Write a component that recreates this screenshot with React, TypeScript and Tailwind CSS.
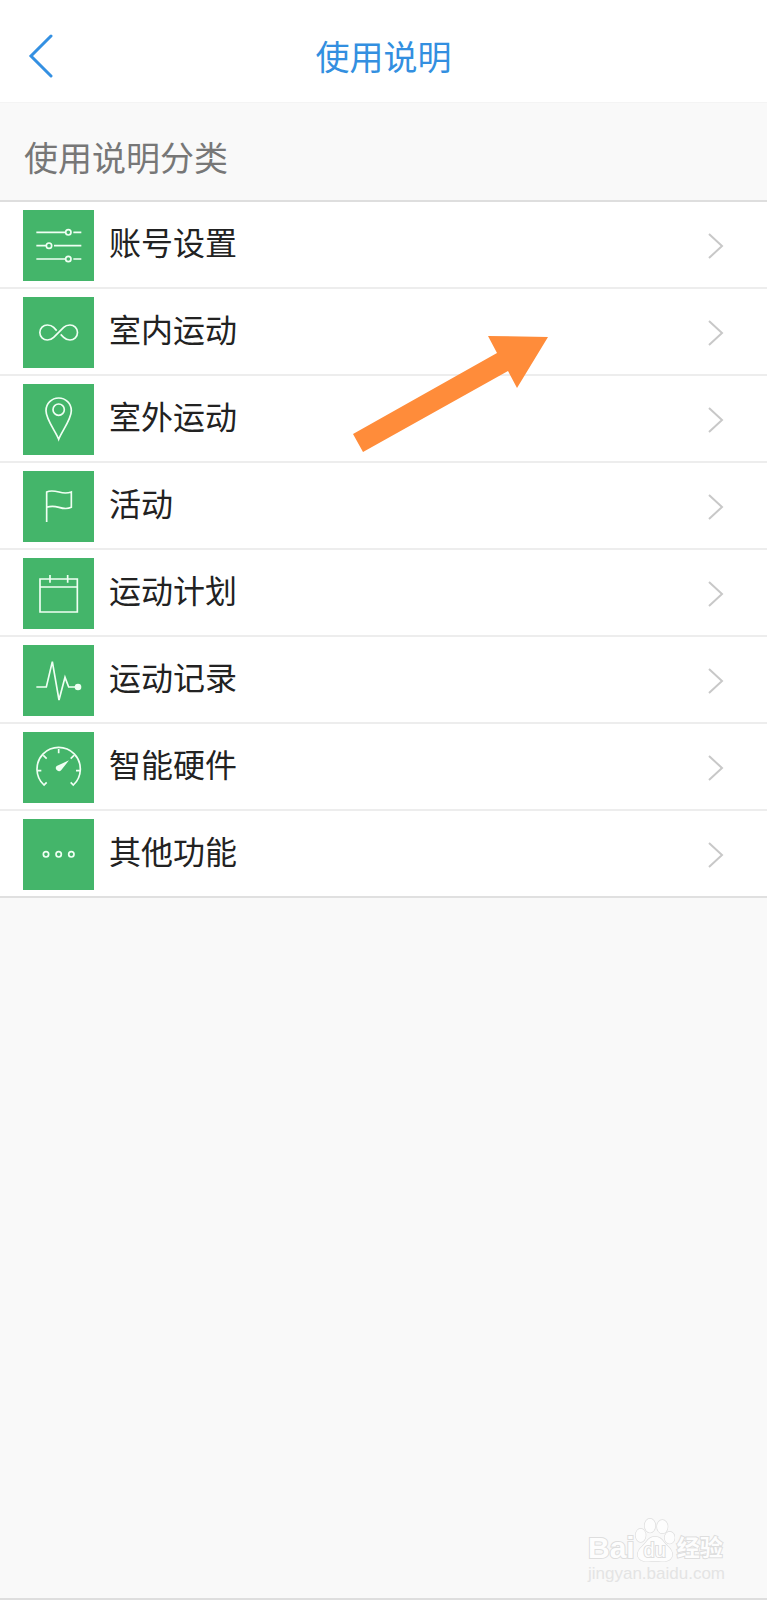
import type { ReactNode } from 'react';

interface Category {
    label: string;
    icon: ReactNode;
}

const categories: Category[] = [
    {
        label: '账号设置',
        icon: (
            <>
                <path d="M40 67H127M151 67H175M40 107H69M93 107H175M40 147H127M151 147H175" />
                <circle cx="136" cy="67" r="8" />
                <circle cx="78" cy="107" r="8" />
                <circle cx="136" cy="147" r="8" />
            </>
        ),
    },
    {
        label: '室内运动',
        icon: (
            <path d="M101 101L92 91C85 84 80 84 73 84A22 22 0 0 0 73 129C82 129 87 126 92 121L122 91C127 86 132 84 141 84A22 22 0 0 1 141 129C132 129 127 126 122 121L113 112" />
        ),
    },
    {
        label: '室外运动',
        icon: (
            <>
                <path d="M107 166C99 144 69 106 69 80A38 38 0 0 1 145 80C145 106 115 144 107 166Z" />
                <circle cx="107" cy="77" r="17" />
            </>
        ),
    },
    {
        label: '活动',
        icon: <path d="M71 153V63C83 57 96 60 108 63C121 67 134 67 145 63V109C134 114 121 113 108 109C96 106 83 105 71 109" />,
    },
    {
        label: '运动计划',
        icon: <path d="M51 63H163V162H51ZM51 87H163M81 51V74M134 51V74" />,
    },
    {
        label: '运动记录',
        icon: (
            <>
                <path d="M40 126H70L88 50L108 165L126 97L137 126H160" />
                <circle cx="165" cy="126" r="10" fill="currentColor" stroke="none" />
            </>
        ),
    },
    {
        label: '智能硬件',
        icon: (
            <>
                <path d="M71 151L63 159A65 65 0 1 1 151 159L143 151M107 51V64M42 116H55M159 116H172M61 70L71 80M153 70L143 80" />
                <path d="M138 85L115 114A9 9 0 1 1 101 102Z" fill="currentColor" stroke="none" />
            </>
        ),
    },
    {
        label: '其他功能',
        icon: (
            <>
                <circle cx="69" cy="106" r="8" />
                <circle cx="107" cy="106" r="8" />
                <circle cx="145" cy="106" r="8" />
            </>
        ),
    },
];

const CategoryRow = ({ label, icon }: Category) => (
    <li className="border-b-2 border-[#ededed] last:border-[#e0e0e0]">
        <a href="#" className="flex items-center pt-2 pr-[43px] pb-1.5 pl-[23px]">
            <span className="size-[71px] shrink-0 bg-[#44b56a] text-[#effff3]">
                <svg viewBox="0 0 213 213" className="size-full" fill="none" stroke="currentColor" strokeWidth="5" aria-hidden="true">
                    {icon}
                </svg>
            </span>
            <span className="ml-[15px] flex-1 pb-1 text-[32px] leading-10 text-[#222222]">{label}</span>
            <svg viewBox="0 0 16 28" className="h-7 w-4 shrink-0" fill="none" stroke="#c8c8c8" strokeWidth="2" aria-hidden="true">
                <path d="M1 2L14 14L1 26" />
            </svg>
        </a>
    </li>
);

const Arrow = () => (
    <svg viewBox="0 0 195 116" className="pointer-events-none absolute top-[134px] left-[46%] w-[195px]" fill="#ff8c3a" aria-hidden="true">
        <path d="M0 98L144 17L135 0L195 1L164 52L155 35L10 116Z" />
    </svg>
);

const Watermark = () => (
    <div className="absolute right-11 bottom-3 w-[135px] text-[#fdfdfd]">
        <div className="flex h-[46px] items-end [paint-order:stroke_fill] [-webkit-text-stroke:2px_#dedede]">
            <span className="text-[30px] leading-7 font-bold">Bai</span>
            <span className="relative h-[46px] w-10 shrink-0">
                <svg viewBox="0 0 120 138" className="size-full" fill="#fdfdfd" stroke="#dedede" strokeWidth="4" aria-hidden="true">
                    <ellipse cx="17" cy="58" rx="15" ry="20" />
                    <ellipse cx="45" cy="29" rx="16" ry="21" />
                    <ellipse cx="82" cy="32" rx="16" ry="20" />
                    <ellipse cx="104" cy="65" rx="15" ry="18" />
                    <path d="M60 62C80 62 84 78 98 91C112 103 117 118 106 129C96 139 78 136 60 136C42 136 24 139 14 129C3 118 8 103 22 91C36 78 40 62 60 62Z" />
                </svg>
                <span className="absolute inset-x-0 bottom-0 text-center text-[20px] leading-6">du</span>
            </span>
            <span className="ml-0.5 text-[23px] leading-7 font-bold whitespace-nowrap">经验</span>
        </div>
        <div className="text-[17px] leading-6 text-[#e4e4e4]">jingyan.baidu.com</div>
    </div>
);

export default function App() {
    return (
        <div className="relative min-h-screen border-b-2 border-[#dedede] bg-[#f9f9f9] font-['Liberation_Sans','Noto_Sans_CJK_SC',sans-serif]">
            <header className="grid grid-cols-[64px_1fr_64px] items-center border-b border-[#f4f4f4] bg-white pt-8 pb-[22px]">
                <button type="button" aria-label="返回" className="flex h-12 items-center pl-7">
                    <svg viewBox="0 0 26 44" className="h-11 w-[26px]" fill="none" stroke="#3490e2" strokeWidth="3" strokeLinecap="round" aria-hidden="true">
                        <path d="M23 2L3 22L23 42" />
                    </svg>
                </button>
                <h1 className="pt-1 text-center text-[34px] leading-11 text-[#338fe0]">使用说明</h1>
            </header>

            <main>
                <h2 className="px-6 pt-8 pb-[17px] text-[34px] leading-12 text-[#777777]">使用说明分类</h2>
                <ul className="relative border-t-2 border-[#dedede] bg-white">
                    <li className="contents" role="presentation">
                        <Arrow />
                    </li>
                    {categories.map((category) => (
                        <CategoryRow key={category.label} {...category} />
                    ))}
                </ul>
            </main>

            <Watermark />
        </div>
    );
}
